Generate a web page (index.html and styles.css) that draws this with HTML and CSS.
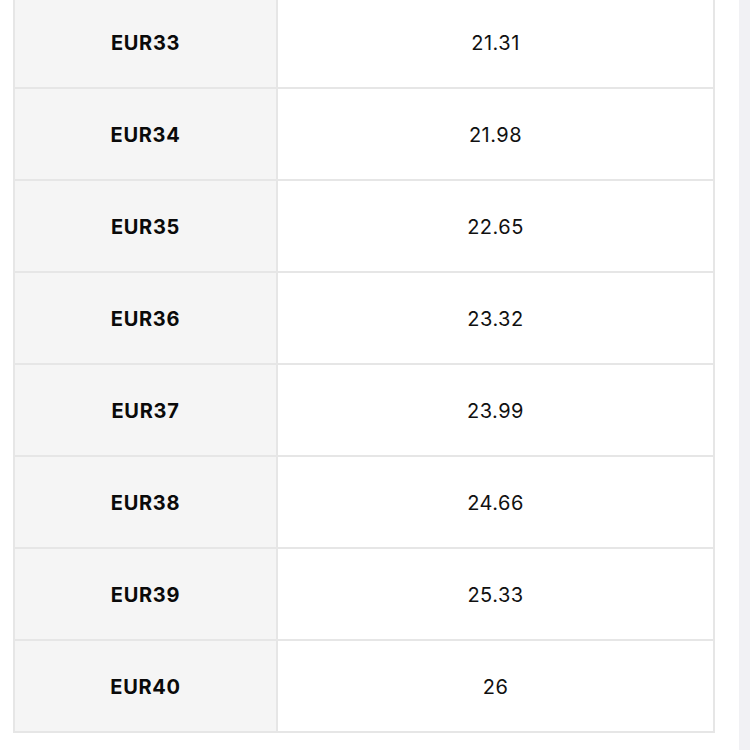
FILE: index.html
```html
<!DOCTYPE html>
<html lang="en">
<head>
<meta charset="utf-8">
<title>Size table</title>
<link rel="stylesheet" href="styles.css">
</head>
<body>
<div class="page">
  <main class="content">
    <div class="table">
      <div class="row"><div class="cell key">EUR33</div><div class="cell val">21.31</div></div>
      <div class="row"><div class="cell key">EUR34</div><div class="cell val">21.98</div></div>
      <div class="row"><div class="cell key">EUR35</div><div class="cell val">22.65</div></div>
      <div class="row"><div class="cell key">EUR36</div><div class="cell val">23.32</div></div>
      <div class="row"><div class="cell key">EUR37</div><div class="cell val">23.99</div></div>
      <div class="row"><div class="cell key">EUR38</div><div class="cell val">24.66</div></div>
      <div class="row"><div class="cell key">EUR39</div><div class="cell val">25.33</div></div>
      <div class="row"><div class="cell key">EUR40</div><div class="cell val">26</div></div>
    </div>
  </main>
  <aside class="side"></aside>
</div>
</body>
</html>
```

FILE: styles.css
```css
html, body {
  margin: 0;
  padding: 0;
  background: #ffffff;
  height: 750px;
  overflow: hidden;
}
body {
  font-family: Inter, "Liberation Sans", sans-serif;
  color: #111111;
}
.page {
  display: flex;
  height: 750px;
}
.content {
  flex: 1;
  padding-left: 13px;
  padding-right: 24px;
}
.side {
  width: 11px;
  background: #f1f1f4;
}
.table {
  margin-top: -5px;
  border: 2px solid #e6e6e6;
}
.row {
  display: grid;
  grid-template-columns: 263px 1fr;
  border-bottom: 2px solid #e6e6e6;
}
.row:last-child {
  border-bottom: none;
}
.cell {
  height: 90px;
  box-sizing: border-box;
  padding-top: 2px;
  display: flex;
  align-items: center;
  justify-content: center;
  font-size: 20px;
}
.key {
  background: #f5f5f5;
  border-right: 2px solid #e6e6e6;
  font-weight: 700;
  letter-spacing: 0.7px;
  color: #0a0a0a;
}
.val {
  font-weight: 400;
  letter-spacing: 0.5px;
}
```
